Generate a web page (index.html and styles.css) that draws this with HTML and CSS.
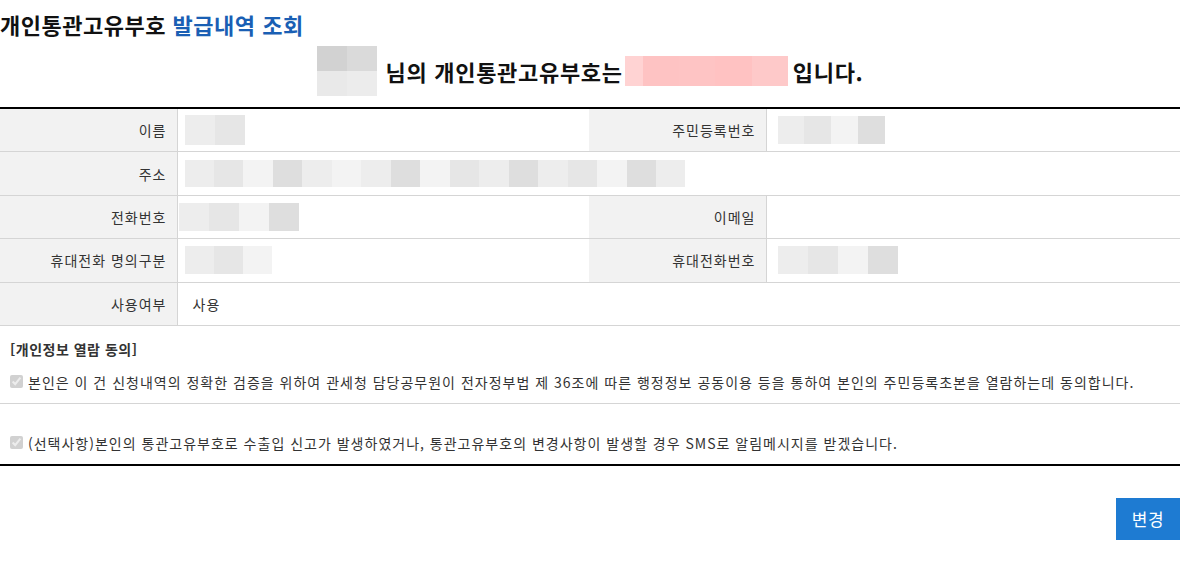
FILE: index.html
```html
<!DOCTYPE html>
<html lang="ko">
<head>
    <meta charset="UTF-8">
    <meta name="viewport" content="width=device-width, initial-scale=1.0">
    <title>개인통관고유부호 발급내역 조회</title>
    <link rel="stylesheet" href="styles.css">
</head>
<body>
    <div id="wrap">
        <h2 class="page-title">개인통관고유부호 <span class="blue">발급내역 조회</span></h2>

        <div class="owner">
            <div class="blur name-blur">
                <span class="b1"></span><span class="b2"></span><span class="b3"></span><span class="b4"></span>
            </div>
            <span class="owner-text">님의 개인통관고유부호는</span>
            <div class="blur code-blur">
                <span></span><span></span><span></span><span></span><span></span>
            </div>
            <span class="owner-text">입니다.</span>
        </div>

        <table class="info">
            <colgroup>
                <col class="col-label">
                <col class="col-value">
                <col class="col-label">
                <col>
            </colgroup>
            <tr>
                <th>이름</th>
                <td><div class="blur row-blur w60"><span></span><span></span></div></td>
                <th>주민등록번호</th>
                <td><div class="blur row-blur w107 shift"><span></span><span></span><span></span><span></span></div></td>
            </tr>
            <tr>
                <th>주소</th>
                <td colspan="3"><div class="blur row-blur addr"><span></span><span></span><span></span><span></span><span></span><span></span><span></span><span></span><span></span><span></span><span></span><span></span><span></span><span></span><span></span><span></span><span></span></div></td>
            </tr>
            <tr>
                <th>전화번호</th>
                <td class="tight"><div class="blur row-blur w120"><span></span><span></span><span></span><span></span></div></td>
                <th>이메일</th>
                <td></td>
            </tr>
            <tr>
                <th>휴대전화 명의구분</th>
                <td><div class="blur row-blur w87"><span></span><span></span><span></span></div></td>
                <th>휴대전화번호</th>
                <td><div class="blur row-blur w120 shift"><span></span><span></span><span></span><span></span></div></td>
            </tr>
            <tr>
                <th>사용여부</th>
                <td class="text">사용</td>
                <th class="empty"></th>
                <td></td>
            </tr>
        </table>

        <div class="agree">
            <div class="agree-box">
                <p class="agree-title">[개인정보 열람 동의]</p>
                <label class="check"><input type="checkbox" checked disabled> 본인은 이 건 신청내역의 정확한 검증을 위하여 관세청 담당공무원이 전자정부법 제 36조에 따른 행정정보 공동이용 등을 통하여 본인의 주민등록초본을 열람하는데 동의합니다.</label>
            </div>
            <div class="agree-box second">
                <label class="check"><input type="checkbox" checked disabled> (선택사항)본인의 통관고유부호로 수출입 신고가 발생하였거나, 통관고유부호의 변경사항이 발생할 경우 SMS로 알림메시지를 받겠습니다.</label>
            </div>
        </div>

        <div class="btn-area">
            <button class="btn-blue">변경</button>
        </div>
    </div>
</body>
</html>
```

FILE: styles.css
```css
body {
    margin: 0;
    background: #fff;
    color: #333;
    font-family: "Malgun Gothic", "Noto Sans CJK KR", "Noto Sans", sans-serif;
    font-size: 14px;
    letter-spacing: 1px;
}

#wrap {
    width: 1180px;
}

.page-title {
    margin: 0;
    padding-top: 9px;
    font-size: 22px;
    line-height: 30px;
    font-weight: bold;
    color: #111;
    letter-spacing: 0.5px;
}

.page-title .blue {
    color: #1a5fb4;
}

.owner {
    display: flex;
    justify-content: center;
    align-items: center;
    margin-top: 7px;
    height: 50px;
}

.owner-text {
    font-size: 22px;
    font-weight: bold;
    color: #111;
    letter-spacing: 0.7px;
}

.blur {
    display: flex;
    flex-wrap: wrap;
}

.name-blur {
    width: 60px;
    height: 50px;
    margin-right: 9px;
}

.name-blur span {
    width: 30px;
    height: 25px;
}

.name-blur .b1 { background: #d2d2d2; }
.name-blur .b2 { background: #dadada; }
.name-blur .b3 { background: #e9e9e9; }
.name-blur .b4 { background: #ececec; }

.code-blur {
    width: 163px;
    height: 30px;
    margin: 0 5px 0 2px;
    flex-wrap: nowrap;
}

.code-blur span {
    flex: 1;
}

.code-blur span:nth-child(1) { background: #ffd3d3; flex: 0.5; }
.code-blur span:nth-child(2) { background: #fec3c3; }
.code-blur span:nth-child(3) { background: #fec4c4; }
.code-blur span:nth-child(4) { background: #ffc2c2; }
.code-blur span:nth-child(5) { background: #fec9c9; }

.info {
    width: 100%;
    border-collapse: collapse;
    border-top: 2px solid #000;
    margin-top: 11px;
}

.col-label {
    width: 177px;
}

.col-value {
    width: 412px;
}

.info th,
.info td {
    height: 42.4px;
    padding: 0;
    border-bottom: 1px solid #d5d5d5;
    font-weight: normal;
}

.info th {
    background: #f2f2f2;
    text-align: right;
    padding-right: 10px;
    border-right: 1px solid #d5d5d5;
    color: #333;
}

.info th.empty {
    background: #fff;
    border-right: 0;
}

.info td {
    padding-left: 7px;
}

.info td.tight {
    padding-left: 1px;
}

.info td.text {
    padding-left: 15px;
}

.row-blur {
    height: 28px;
    flex-wrap: nowrap;
}

.row-blur span {
    flex: 1;
    background: #ededed;
}

.row-blur span:nth-child(2n) { background: #e6e6e6; }
.row-blur span:nth-child(3n) { background: #f3f3f3; }
.row-blur span:nth-child(4n) { background: #dedede; }

.row-blur.shift {
    margin-left: 4px;
}

.w60 { width: 60px; height: 30px; }
.w87 { width: 87px; }
.w107 { width: 107px; }
.w120 { width: 120px; }

.addr {
    width: 501px;
    height: 27px;
}

.agree {
    border-bottom: 2px solid #000;
}

.agree-box {
    padding: 13px 10px 11px;
}

.agree-box.second {
    border-top: 1px solid #d5d5d5;
    padding: 29px 10px 11px;
}

.agree-title {
    margin: 0 0 13px;
    font-weight: bold;
    line-height: 20px;
    letter-spacing: 0.5px;
}

.check {
    display: flex;
    align-items: center;
    line-height: 20px;
    color: #333;
}

.check input {
    margin: 0 5px 0 0;
    width: 13px;
    height: 13px;
}

.btn-area {
    display: flex;
    justify-content: flex-end;
    margin-top: 32px;
}

.btn-blue {
    width: 64px;
    height: 42px;
    border: none;
    background: #1e7bd2;
    color: #fff;
    font-family: inherit;
    font-size: 17px;
    letter-spacing: 0.5px;
    cursor: pointer;
    padding: 0;
}
```
